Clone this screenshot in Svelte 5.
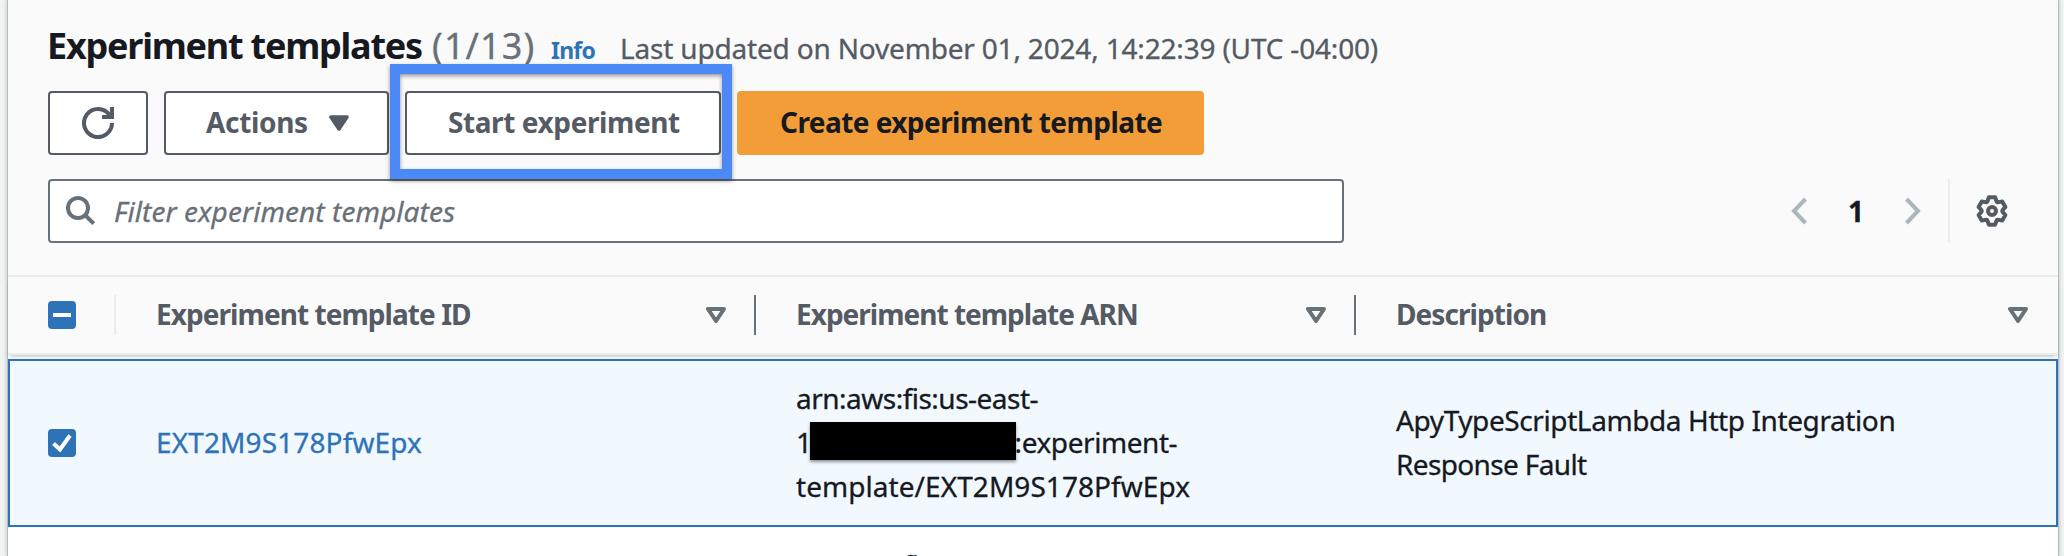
<script>
  const columns = [
    { label: 'Experiment template ID', cls: 'id' },
    { label: 'Experiment template ARN', cls: 'arn' },
    { label: 'Description', cls: 'desc' }
  ];

  // Outline of a six-toothed cog centred on 0,0
  const cog = Array.from({ length: 6 }, (_, i) =>
    [[-29, 10.3], [-22, 11.3], [-13, 14], [13, 14], [22, 11.3], [29, 10.3]].map(([a, r]) => {
      const t = ((i * 60 + a - 90) * Math.PI) / 180;
      return `${(r * Math.cos(t)).toFixed(2)},${(r * Math.sin(t)).toFixed(2)}`;
    }).join(' ')
  ).join(' ');
</script>

<div class="page">
  <main class="panel">
    <header>
      <div class="heading">
        <h2>Experiment templates</h2>
        <span class="count">(1/13)</span>
        <a class="info" href="#info">Info</a>
        <span class="updated">Last updated on November 01, 2024, 14:22:39 (UTC -04:00)</span>
      </div>
      <div class="actions">
        <button class="refresh" aria-label="Refresh">
          <svg width="32" height="32" viewBox="0 0 32 32" fill="none" stroke="#545b64" stroke-width="4">
            <path d="M30 16A14 14 0 1 1 27.6 8.2" />
            <path d="M30 0V10H20" />
          </svg>
        </button>
        <button class="menu">
          <span>Actions</span>
          <svg width="20" height="16" viewBox="0 0 20 16"><path d="M2 2H18L10 14Z" fill="#545b64" stroke="#545b64" stroke-width="3.6" stroke-linejoin="round" /></svg>
        </button>
        <div class="start-wrap">
          <button class="start"><span>Start experiment</span></button>
          <div class="highlight"></div>
        </div>
        <button class="create"><span>Create experiment template</span></button>
      </div>
      <div class="tools">
        <div class="search">
          <svg width="30" height="30" viewBox="0 0 30 30" fill="none" stroke="#687078" stroke-width="4">
            <circle cx="12" cy="12" r="10" />
            <path d="M19 19L27.7 27.7" />
          </svg>
          <span>Filter experiment templates</span>
        </div>
        <div class="pager">
          <svg width="16" height="28" viewBox="0 0 16 28" fill="none" stroke="#aab7b8" stroke-width="4"><path d="M14.5 2L3 14L14.5 26" /></svg>
          <span class="page-no">1</span>
          <svg width="16" height="28" viewBox="0 0 16 28" fill="none" stroke="#aab7b8" stroke-width="4"><path d="M1.5 2L13 14L1.5 26" /></svg>
        </div>
        <div class="settings">
          <svg width="34" height="34" viewBox="-17 -17 34 34" fill="none" stroke="#545b64" stroke-width="4" stroke-linejoin="round">
            <polygon points={cog} />
            <circle r="4" />
          </svg>
        </div>
      </div>
    </header>

    <div class="grid thead">
      <div class="cell select"><span class="box"><svg width="28" height="28"><path d="M5 14H23" stroke="#fff" stroke-width="4" /></svg></span></div>
      {#each columns as c}
        <div class="cell th {c.cls}">
          <span>{c.label}</span>
          <svg width="20" height="16" viewBox="0 0 20 16"><path d="M2 2H18L10 14Z" fill="none" stroke="#687078" stroke-width="4" stroke-linejoin="round" /></svg>
        </div>
      {/each}
    </div>

    <div class="grid row selected">
      <div class="cell select"><span class="box"><svg width="28" height="28"><path d="M5.5 14.5L12 20.5L22 6.5" fill="none" stroke="#fff" stroke-width="4" /></svg></span></div>
      <div class="cell"><a class="link" href="#template">EXT2M9S178PfwEpx</a></div>
      <div class="cell lines">
        <div class="l1">arn:aws:fis:us-east-</div>
        <div class="l2">1<span class="redacted"></span>:experiment-</div>
        <div class="l3">template/EXT2M9S178PfwEpx</div>
      </div>
      <div class="cell lines">
        <div class="d1">ApyTypeScriptLambda Http Integration</div>
        <div class="d2">Response Fault</div>
      </div>
    </div>

    <div class="grid row next">
      <div class="cell"></div>
      <div class="cell"></div>
      <div class="cell lines"><div class="l1">arn:aws:fis:us-east-</div></div>
    </div>
  </main>
</div>

<style>
  :global(body) { margin: 0; overflow: hidden; }
  .page {
    box-sizing: border-box;
    width: 2064px;
    height: 556px;
    padding: 0 6px 0 8px;
    overflow: hidden;
    background: #f2f3f3;
    font: 400 28px/44px "Noto Sans", "Open Sans", sans-serif;
    color: #16191f;
    -webkit-text-stroke-width: 0.3px;
  }
  .panel {
    height: 556px;
    background: #fff;
    box-shadow: 0 0 0 1px #b4bcbd, 0 0 4px 1px rgba(0, 28, 36, 0.25);
    overflow: visible;
  }
  header {
    box-sizing: border-box;
    height: 277px;
    padding: 22px 0 0 40px;
    background: #fafafa;
    border-bottom: 2px solid #eaeded;
  }
  .heading {
    display: flex;
    align-items: baseline;
    height: 69px;
    line-height: 48px;
    white-space: nowrap;
  }
  h2 { margin: 0 0 0 -1px; width: 377px; font-size: 36px; font-weight: 700; letter-spacing: -1.23px; }
  .count { width: 120px; margin-left: 8px; font-size: 36px; letter-spacing: 1.1px; color: #687078; }
  .info { width: 69px; font-size: 23px; font-weight: 700; letter-spacing: -0.8px; color: #2e73b8; text-decoration: none; margin-left: -1px; }
  .updated { letter-spacing: -0.18px; color: #545b64; }

  .actions { display: flex; height: 64px; }
  button {
    box-sizing: border-box;
    display: flex;
    align-items: center;
    height: 64px;
    padding: 0;
    border: 2px solid #545b64;
    border-radius: 4px;
    background: #fff;
    color: #545b64;
    font: 700 28px/44px "Noto Sans", "Open Sans", sans-serif;
    white-space: nowrap;
  }
  button span, h2, .info, .th { -webkit-text-stroke-width: 0; }
  button span { margin-top: -2px; }
  .refresh { width: 100px; padding-left: 32px; }
  .menu { width: 225px; margin-left: 16px; padding: 0 38px 0 40px; justify-content: space-between; letter-spacing: -0.34px; }
  .start-wrap { position: relative; margin-left: 16px; }
  .start { width: 316px; padding-left: 41px; letter-spacing: -0.41px; }
  .create { width: 467px; margin-left: 16px; padding-left: 41px; background: #f29d38; border-color: #f29d38; color: #16191f; letter-spacing: -0.56px; }
  .highlight {
    position: absolute;
    z-index: 2;
    top: -27px;
    right: -11px;
    bottom: -24px;
    left: -15px;
    border: 10px solid #4b89f6;
    filter: drop-shadow(0 2px 2px rgba(0, 0, 0, 0.4));
  }

  .tools { display: flex; align-items: center; margin-top: 24px; height: 64px; }
  .search {
    box-sizing: border-box;
    display: flex;
    align-items: center;
    width: 1296px;
    height: 64px;
    padding-left: 16px;
    border: 2px solid #687078;
    border-radius: 4px;
    background: #fff;
    color: #687078;
    font-style: italic;
    letter-spacing: 0.07px;
  }
  .search span { margin: 0 0 0 18px; }
  .pager { display: flex; align-items: center; width: 130px; margin-left: 447px; justify-content: space-between; }
  .page-no { font-weight: 700; margin-top: -1px; }
  .settings {
    box-sizing: border-box;
    display: flex;
    align-items: center;
    height: 64px;
    margin-left: 27px;
    padding-left: 25px;
    border-left: 2px solid #eaeded;
  }

  .grid { display: grid; grid-template-columns: 108px 640px 600px 702px; }
  .cell { display: flex; align-items: center; box-sizing: border-box; padding-left: 40px; white-space: nowrap; }
  .thead {
    box-sizing: border-box;
    position: relative;
    height: 78px;
    margin-bottom: 4px;
    padding: 18px 0;
    line-height: 40px;
    background: #fafafa;
    border-bottom: 2px solid #eaeded;
    box-shadow: 0 3px 4px -2px rgba(0, 28, 36, 0.3);
  }
  .thead .cell { height: 40px; }
  .thead .select { border-right: 2px solid #eaeded; }
  .th { justify-content: space-between; padding: 0 28px 0 40px; font-weight: 700; color: #545b64; border-right: 2px solid #687078; }
  .th span { margin-top: -2px; }
  .th.id { letter-spacing: -0.94px; }
  .th.arn { letter-spacing: -0.99px; }
  .th.desc { letter-spacing: -0.93px; border-right: 0; padding-right: 30px; }
  .box { display: block; width: 28px; height: 28px; border-radius: 4px; background: #2e73b8; }
  .box svg { display: block; }

  .row { height: 168px; }
  .selected { background: #f1f8fe; box-shadow: inset 0 0 0 2px #2e73b8; }
  .link { margin: -2px 0 0 0; letter-spacing: 0.12px; color: #2e73b8; text-decoration: none; }
  .lines { flex-direction: column; justify-content: center; align-items: flex-start; padding-bottom: 2px; }
  .next .lines { justify-content: flex-start; padding-top: 16px; }
  .l1 { letter-spacing: -0.51px; }
  .l2 { display: flex; letter-spacing: -0.43px; }
  .l3 { letter-spacing: 0.06px; }
  .d1 { letter-spacing: -0.4px; }
  .d2 { letter-spacing: -0.64px; }
  .redacted { width: 206px; height: 38px; margin: 2px -1px 0 -2px; background: #000; box-shadow: 0 2px 3px rgba(0, 0, 0, 0.4); }
</style>
